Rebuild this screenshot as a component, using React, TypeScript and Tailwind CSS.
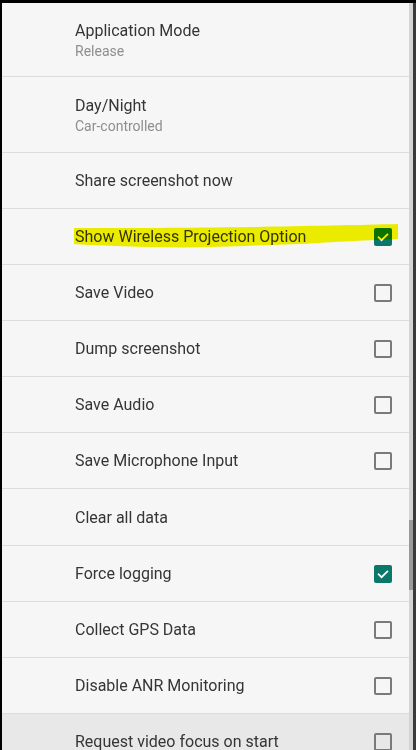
import React from "react";

type Row = { title: string; sub?: string; check?: boolean; h: string; bg?: string; highlight?: boolean };

const rows: Row[] = [
  { title: "Application Mode", sub: "Release", h: "h-[74px]" },
  { title: "Day/Night", sub: "Car-controlled", h: "h-[76px]" },
  { title: "Share screenshot now", h: "h-[56px]" },
  { title: "Show Wireless Projection Option", check: true, h: "h-[56px]", highlight: true },
  { title: "Save Video", check: false, h: "h-[56px]" },
  { title: "Dump screenshot", check: false, h: "h-[56px]" },
  { title: "Save Audio", check: false, h: "h-[56px]" },
  { title: "Save Microphone Input", check: false, h: "h-[56px]" },
  { title: "Clear all data", h: "h-[57px]" },
  { title: "Force logging", check: true, h: "h-[56px]" },
  { title: "Collect GPS Data", check: false, h: "h-[56px]" },
  { title: "Disable ANR Monitoring", check: false, h: "h-[56px]" },
  { title: "Request video focus on start", check: false, h: "h-[56px]", bg: "bg-[#e8e8e8]" },
];

function Box({ checked }: { checked: boolean }) {
  if (checked) {
    return (
      <div className="w-[18px] h-[18px] rounded-[2px] bg-[#0b776b] flex items-center justify-center">
        <svg width="14" height="14" viewBox="0 0 24 24" fill="none" stroke="#ffffff" strokeWidth="3" strokeLinecap="square">
          <path d="M4.5 12.5l5 5 10-10" />
        </svg>
      </div>
    );
  }
  return <div className="w-[18px] h-[18px] rounded-[2px] border-2 border-[#7a7a7a]" />;
}

export default function App() {
  return (
    <div className="w-[416px] h-[750px] bg-black flex pt-[3px] pl-[2px] overflow-hidden" style={{ fontFamily: "Roboto, 'Open Sans', sans-serif" }}>
      <div className="relative flex-1 bg-[#f6f6f6] h-full overflow-hidden">
        {rows.map((r, i) => (
          <div
            key={i}
            className={`relative flex items-center justify-between border-b border-[#dddddd] pl-[73px] pr-[21px] shrink-0 ${r.h} ${r.bg ?? ""}`}
          >
            <div className={`flex flex-col ${r.sub ? "pt-[3px]" : "pt-[1px]"}`}>
              <span className="text-[16px] leading-[20px] text-[#353535]">{r.title}</span>
              {r.sub && <span className="text-[14px] leading-[20px] text-[#8e8e8e]">{r.sub}</span>}
            </div>
            {r.check !== undefined && <Box checked={r.check} />}
            {r.highlight && (
              <svg className="absolute left-0 top-0 mix-blend-multiply pointer-events-none" width="411" height="56" viewBox="0 0 411 56">
                <path
                  d="M72 19 C120 19 181 19 250 18 C300 17 360 16 396 15 L396 30 C370 31 330 33 298 35 C260 36 220 38 181 38.5 C140 38 100 37 72 35 Z"
                  fill="#f4f400"
                />
              </svg>
            )}
          </div>
        ))}
        <div className="absolute right-0 top-0 w-[4px] h-full bg-[#d4d4d4]" />
        <div className="absolute right-0 top-[517px] w-[4px] h-[70px] bg-[#9a9a9a]" />
      </div>
      <div className="w-[3px] h-full bg-[#3a3a3a]" />
    </div>
  );
}
